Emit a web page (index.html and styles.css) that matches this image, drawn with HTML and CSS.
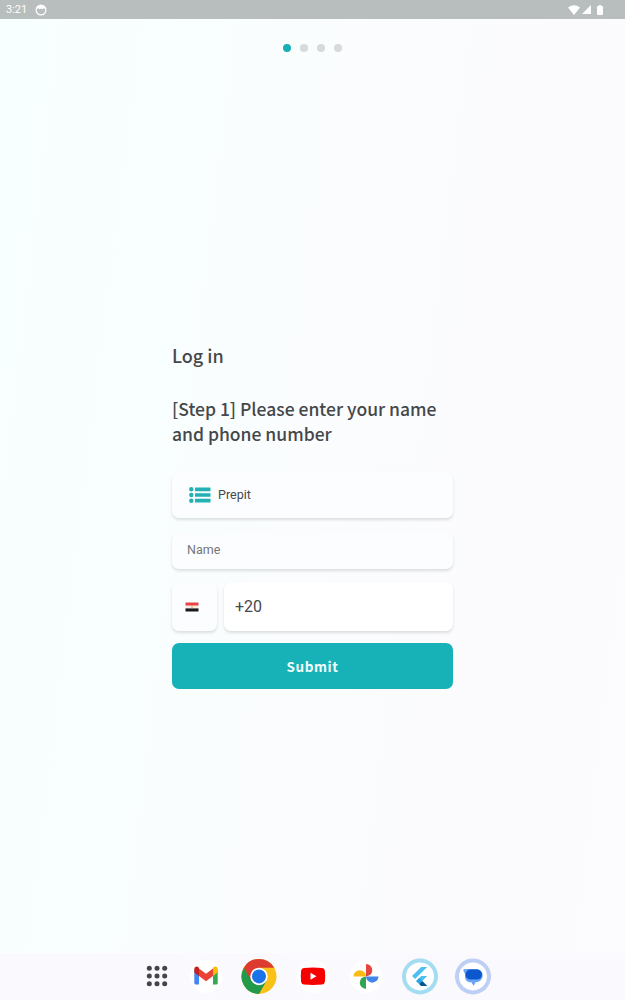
FILE: index.html
```
<!DOCTYPE html>
<html lang="en">
<head>
  <meta charset="UTF-8">
  <meta name="viewport" content="width=device-width, initial-scale=1.0">
  <title>Log in</title>
  <link rel="stylesheet" href="styles.css">
</head>
<body>
  <div class="screen">

    <header class="status-bar">
      <div class="status-left">
        <span class="time">3:21</span>
        <svg width="12" height="12" viewBox="0 0 12 12">
          <circle cx="6" cy="6" r="4.9" fill="none" stroke="#fff" stroke-width="1.2"/>
          <path d="M1.5 5.2C1.8 2.3 3.6 1 6 1s4.200 1.300 4.500 4.200L8.600 4.200 7.500 5.200 6 4.400 4.500 5.200 3.400 4.200z" fill="#fff"/>
        </svg>
      </div>
      <div class="status-right">
        <svg width="12" height="10" viewBox="0 0 12 10"><path d="M0 2.600Q6-2 12 2.600L6 10z" fill="#fff"/></svg>
        <svg width="9" height="9" viewBox="0 0 9 9"><path d="M9 0v9H0z" fill="#fff"/></svg>
        <svg class="battery" width="6" height="10" viewBox="0 0 6 10"><path d="M1.800 0h2.400v1H5q1 0 1 1v7q0 1-1 1H1q-1 0-1-1V2q0-1 1-1h.8z" fill="#fff"/></svg>
      </div>
    </header>

    <div class="steps">
      <span class="dot active"></span>
      <span class="dot"></span>
      <span class="dot"></span>
      <span class="dot"></span>
    </div>

    <main class="login">
      <h1 class="title">Log in</h1>
      <h2 class="subtitle">[Step 1] Please enter your name and phone number</h2>

      <div class="card organization">
        <svg width="22" height="16" viewBox="0 0 22 16" fill="#23b1b5">
          <circle cx="2.300" cy="2.300" r="2.200"/>
          <circle cx="2.300" cy="8" r="2.200"/>
          <circle cx="2.300" cy="13.700" r="2.200"/>
          <rect x="6" y=".6" width="15.500" height="3.600" rx=".5"/>
          <rect x="6" y="6.200" width="15.500" height="3.600" rx=".5"/>
          <rect x="6" y="11.800" width="15.500" height="3.600" rx=".5"/>
        </svg>
        <span class="organization-name">Prepit</span>
      </div>

      <input class="card name" type="text" placeholder="Name">

      <div class="phone-row">
        <div class="card country">
          <svg width="14" height="10" viewBox="0 0 14 10">
            <rect x=".5" y=".5" width="13" height="9" rx=".8" fill="#fff"/>
            <path d="M1 .5h12q.5 0 .5.500v2.700H.5V1Q.5.500 1 .5z" fill="#ea4347"/>
            <path d="M.5 6.200h13V9q0 .5-.5.500H1Q.5 9.500.5 9z" fill="#1c1919"/>
            <path d="M.5 3.700h13v2.500H.5z" fill="#f6eeea"/>
            <path d="M6 3.900h2v2H6z" fill="#ecc97c"/>
          </svg>
        </div>
        <input class="card phone" type="text" value="+20">
      </div>

      <button class="submit">Submit</button>
    </main>

    <footer class="taskbar">
      <svg class="apps" width="22" height="22" viewBox="0 0 22 22" fill="#44454b">
        <circle cx="3.300" cy="3.300" r="2.500"/><circle cx="11" cy="3.300" r="2.500"/><circle cx="18.700" cy="3.300" r="2.500"/>
        <circle cx="3.300" cy="11" r="2.500"/><circle cx="11" cy="11" r="2.500"/><circle cx="18.700" cy="11" r="2.500"/>
        <circle cx="3.300" cy="18.700" r="2.500"/><circle cx="11" cy="18.700" r="2.500"/><circle cx="18.700" cy="18.700" r="2.500"/>
      </svg>

      <!-- Gmail -->
      <svg class="app" viewBox="0 0 36 36">
        <circle cx="18" cy="18.400" r="16.500" fill="#fff"/>
        <path d="M6.300 12v13q0 1.500 1.500 1.500h3.200V15z" fill="#4285f4"/>
        <path d="M25 15v11.500h3.200q1.500 0 1.500-1.500V12z" fill="#34a853"/>
        <path d="M11 10.400l7 5.300 7-5.300V18l-7 5.300L11 18z" fill="#ea4335"/>
        <path d="M6.300 11.200c0-2.600 2.400-3.200 4.100-2L11 9.700V18l-4.700-3.600z" fill="#c5221f"/>
        <path d="M29.700 11.200c0-2.600-2.400-3.200-4.100-2L25 9.700V18l4.700-3.600z" fill="#fbbc04"/>
      </svg>

      <!-- Chrome -->
      <svg class="app" viewBox="0 0 36 36">
        <g transform="translate(0 .4)">
          <circle cx="18" cy="18" r="17.500" fill="#fbc116"/>
          <path d="M18 18L2.840 9.250A17.500 17.500 0 0 0 18 35.500L25.600 22.400z" fill="#229a49"/>
          <path d="M18 18l-7.580 4.400L2.840 9.250A17.500 17.500 0 0 1 33.160 9.250z" fill="#dd3b2f"/>
          <path d="M18 9.250h15.160L25.600 22.400 18 18z" fill="#fbc116"/>
          <circle cx="18" cy="18" r="8.750" fill="#fff"/>
          <circle cx="18" cy="18" r="7" fill="#1b73e8"/>
        </g>
      </svg>

      <!-- YouTube -->
      <svg class="app" viewBox="0 0 36 36">
        <circle cx="18" cy="18.400" r="16.500" fill="#fff"/>
        <path d="M9 10q9-.9 18 0 2.600.2 2.900 2.800.6 5.500 0 11-.3 2.600-2.900 2.800-9 .9-18 0-2.600-.2-2.900-2.800-.6-5.500 0-11Q6.400 10.200 9 10z" fill="#f70000"/>
        <path d="M15.500 14.800v7l6-3.500z" fill="#fff"/>
      </svg>

      <!-- Photos -->
      <svg class="app" viewBox="0 0 36 36">
        <circle cx="18" cy="18.400" r="16.500" fill="#fff"/>
        <g transform="translate(0 .4)">
          <path d="M18 18V5.500a6.250 6.250 0 0 1 0 12.500z" fill="#e5453c"/>
          <path d="M18 18h12.500a6.250 6.250 0 0 1-12.500 0z" fill="#4285e8"/>
          <path d="M18 18v12.500a6.250 6.250 0 0 1 0-12.500z" fill="#32a552"/>
          <path d="M18 18H5.500a6.250 6.250 0 0 1 12.500 0z" fill="#fabc12"/>
        </g>
      </svg>

      <!-- Flutter -->
      <svg class="app" viewBox="0 0 36 36">
        <g transform="translate(0 .4)">
          <circle cx="18" cy="18" r="18" fill="#a4dcf1"/>
          <circle cx="18" cy="18" r="14" fill="#fff"/>
          <path d="M19.200 8.500h6L13 20.700l-3-3z" fill="#4ebff0"/>
          <path d="M19.200 17.500h6l-5 5 5 5h-6l-5-5z" fill="#4ebff0"/>
          <path d="M17.200 25.500l3-3 5 5h-6z" fill="#075591"/>
          <path d="M14.200 22.500l3-3 3 3-3 3z" fill="#2aa4df"/>
        </g>
      </svg>

      <!-- Messages -->
      <svg class="app" viewBox="0 0 36 36">
        <g transform="translate(0 .4)">
          <circle cx="18" cy="18" r="18" fill="#bdcff4"/>
          <circle cx="18" cy="18" r="14" fill="#fff"/>
          <path d="M9.500 10.500H21a6.500 6.500 0 0 1 0 13.400h-.5L18.700 27.500l-2.400-3.600C12 23.900 10 21.500 10 18v-2.500L8.400 12.300Q7.800 10.500 9.500 10.500z" fill="#6ba4f3"/>
          <path d="M15.500 11.200H22a5 5 0 0 1 5 5 5 5 0 0 1-5 5h-6.500a5 5 0 0 1-5-5 5 5 0 0 1 5-5z" fill="#0c57d0"/>
        </g>
      </svg>
    </footer>

  </div>
</body>
</html>
```
FILE: styles.css
```
* {
  box-sizing: border-box;
}
body {
  margin: 0;
  font-family: Roboto, sans-serif;
  color: #45484b;
}
svg {
  display: block;
  flex-shrink: 0;
  overflow: visible;
}
.screen {
  display: flex;
  flex-direction: column;
  height: 1000px;
  background: linear-gradient(97deg, #f8ffff 0%, #f9fefe 28%, #fbfcfe 55%, #fcfbfe 100%);
}

/* Status bar */
.status-bar {
  display: flex;
  justify-content: space-between;
  align-items: center;
  height: 19px;
  padding: 0 22px 0 6px;
  background: #b8bdbd;
}
.status-left,
.status-right {
  display: flex;
  align-items: center;
}
.status-left {
  gap: 8px;
}
.status-right {
  gap: 2px;
}
.battery {
  margin-left: 4px;
}
.time {
  font-size: 11px;
  color: #fff;
}

/* Step dots */
.steps {
  display: flex;
  justify-content: center;
  gap: 8.7px;
  margin-top: 25px;
}
.dot {
  width: 8px;
  height: 8px;
  border-radius: 50%;
  background: #d6dada;
}
.dot.active {
  background: #17b1b5;
}

/* Form */
.login {
  width: 281px;
  margin: 291px auto 0;
}
.title,
.subtitle {
  margin: 0;
  font-family: "Noto Sans CJK SC", sans-serif;
  font-size: 18px;
  font-weight: 500;
  line-height: 25px;
}
.subtitle {
  margin: 28px 0 26px;
  font-size: 17.5px;
}
.card {
  border: 0;
  border-radius: 7px;
  background: #fbfdfe;
  box-shadow: 0 2px 3px rgba(60, 70, 80, 0.16);
}
.organization {
  display: flex;
  align-items: center;
  gap: 7px;
  height: 46px;
  padding-left: 17px;
  font-size: 12.5px;
}
.organization-name {
  padding-bottom: 1px;
}
.name {
  display: block;
  width: 100%;
  height: 37px;
  margin: 14px 0 13px;
  padding: 0 15px 2px;
  font: 12.5px Roboto, sans-serif;
}
.name::placeholder {
  color: #74777a;
}
.phone-row {
  display: flex;
  gap: 7px;
  height: 49px;
}
.country {
  display: flex;
  align-items: center;
  width: 45px;
  padding-left: 13px;
}
.phone {
  flex: 1;
  min-width: 0;
  padding: 0 11px;
  background: #fff;
  font: 16px Roboto, sans-serif;
  color: #45484b;
}
.submit {
  display: block;
  width: 100%;
  height: 46px;
  margin-top: 12px;
  padding: 0;
  border: 0;
  border-radius: 7px;
  background: #17b1b8;
  font: 700 13.5px "Noto Sans CJK SC", sans-serif;
  letter-spacing: 0.6px;
  color: #f2ffff;
}

/* Taskbar */
.taskbar {
  display: flex;
  align-items: center;
  height: 47px;
  margin-top: auto;
  padding: 0 0 1px 146px;
  background: #faf9fd;
}
.apps {
  margin-right: 20px;
}
.app {
  width: 36px;
  height: 36px;
  margin-right: 17.4px;
}
```
